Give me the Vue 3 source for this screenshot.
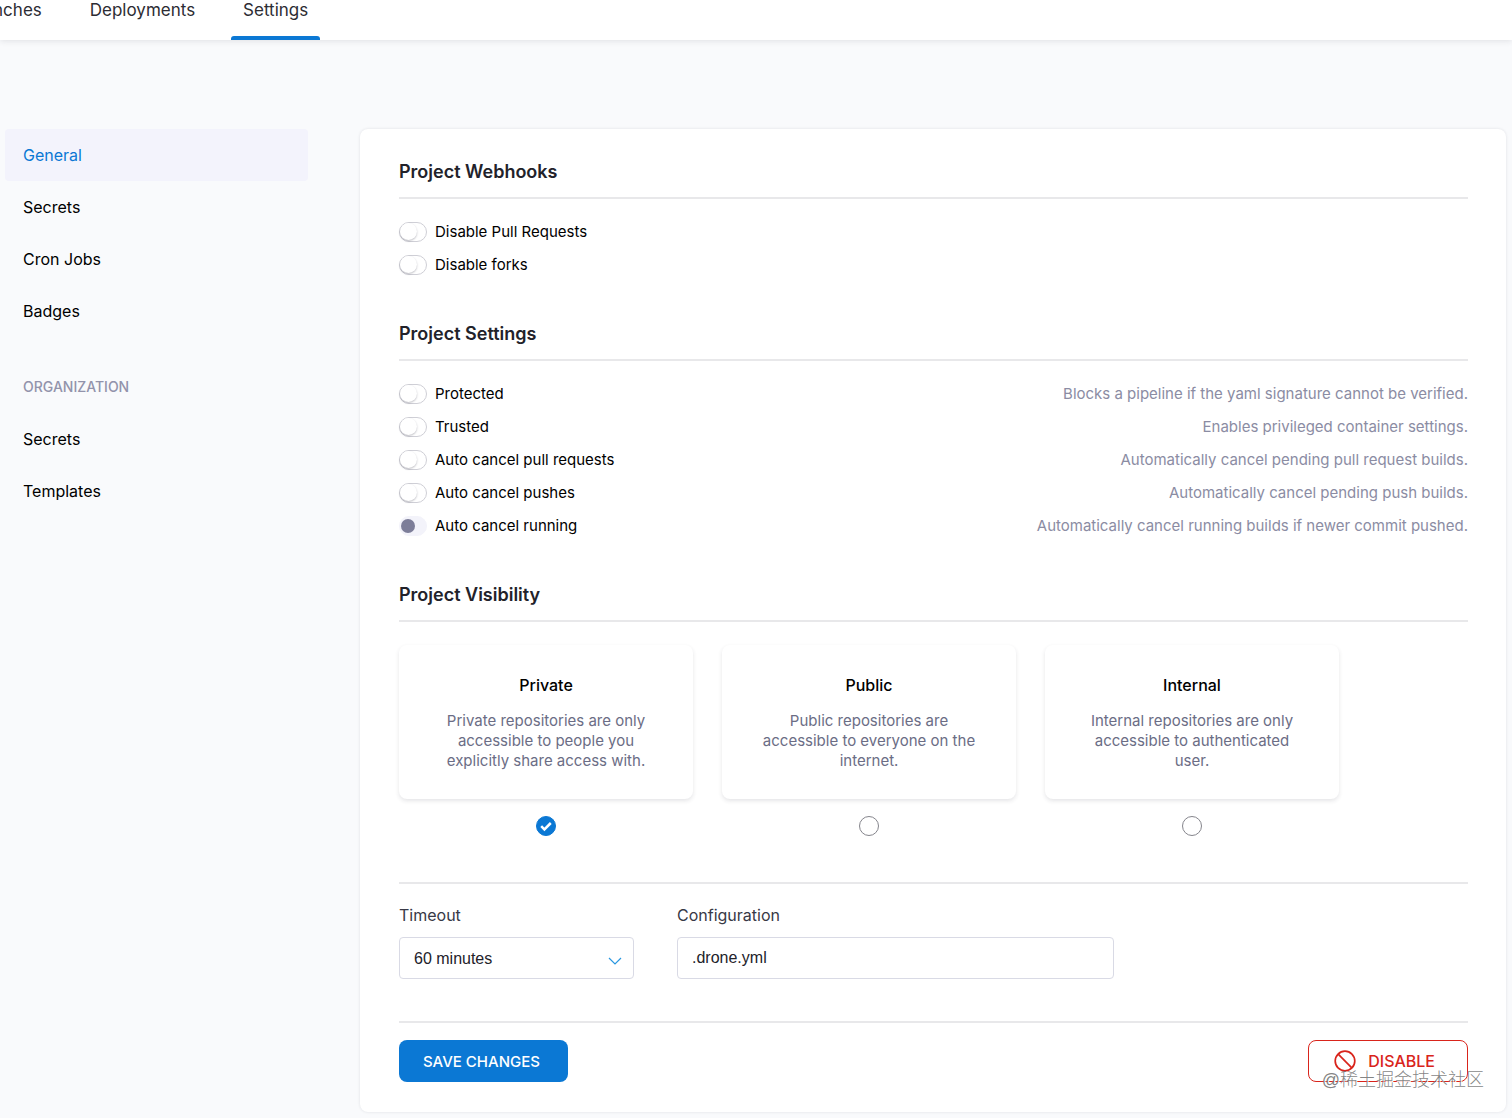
<template>
  <div class="page">
    <header class="topbar">
      <nav class="tabs">
        <a
          v-for="tab in tabs"
          :key="tab"
          href="#"
          class="tab"
          :class="{ active: tab === activeTab }"
          @click.prevent="activeTab = tab"
        >{{ tab }}</a>
      </nav>
    </header>

    <div class="layout">
      <aside class="sidebar">
        <a
          v-for="item in projectLinks"
          :key="item"
          href="#"
          class="side-link"
          :class="{ active: item === 'General' }"
          @click.prevent
        >{{ item }}</a>
        <h2 class="side-title">ORGANIZATION</h2>
        <a v-for="item in orgLinks" :key="item" href="#" class="side-link" @click.prevent>{{ item }}</a>
      </aside>

      <main class="panel">
        <section class="section">
          <h3 class="section-title">Project Webhooks</h3>
          <div v-for="row in webhooks" :key="row.label" class="row">
            <label class="row-label">
              <input v-model="row.on" type="checkbox" class="toggle" />
              {{ row.label }}
            </label>
          </div>
        </section>

        <section class="section">
          <h3 class="section-title">Project Settings</h3>
          <div v-for="row in settings" :key="row.label" class="row">
            <label class="row-label">
              <input v-model="row.on" type="checkbox" class="toggle" :disabled="row.disabled" />
              {{ row.label }}
            </label>
            <span class="hint">{{ row.hint }}</span>
          </div>
        </section>

        <section class="section">
          <h3 class="section-title">Project Visibility</h3>
          <div class="visibility">
            <label v-for="item in visibilities" :key="item.name" class="option">
              <span class="option-card">
                <span class="option-name">{{ item.name }}</span>
                <span class="option-text">{{ item.text }}</span>
              </span>
              <span class="radio-wrap">
                <input v-model="visibility" type="radio" name="visibility" class="radio" :value="item.name" />
                <svg v-if="visibility === item.name" class="radio-check" viewBox="0 0 20 20">
                  <path d="M5.2 10.2l3.2 3.2 6.4-6.4" fill="none" stroke="#fff" stroke-width="2.5" />
                </svg>
              </span>
            </label>
          </div>
        </section>

        <div class="fields">
          <div class="field timeout">
            <label for="timeout">Timeout</label>
            <div class="select-wrap">
              <select id="timeout" v-model="timeout" class="control">
                <option v-for="t in timeouts" :key="t">{{ t }}</option>
              </select>
              <svg class="chevron" viewBox="0 0 14 8">
                <path d="M1 1l6 6 6-6" fill="none" stroke="#2a97e0" stroke-width="1.2" />
              </svg>
            </div>
          </div>
          <div class="field config">
            <label for="config">Configuration</label>
            <input id="config" v-model="config" type="text" class="control" />
          </div>
        </div>

        <div class="actions">
          <button type="button" class="btn save">SAVE CHANGES</button>
          <button type="button" class="btn disable">
            <svg class="ban" viewBox="0 0 22 22">
              <g fill="none" stroke="#d9241b" stroke-width="1.7">
                <circle cx="11" cy="11" r="9.8" />
                <path d="M4.2 4.2l13.6 13.6" />
              </g>
            </svg>
            DISABLE
          </button>
        </div>
      </main>
    </div>

    <div class="watermark">@稀土掘金技术社区</div>
  </div>
</template>

<script setup>
import { ref } from 'vue'

const tabs = ['Branches', 'Deployments', 'Settings']
const activeTab = ref('Settings')

const projectLinks = ['General', 'Secrets', 'Cron Jobs', 'Badges']
const orgLinks = ['Secrets', 'Templates']

const webhooks = ref([
  { label: 'Disable Pull Requests', on: false },
  { label: 'Disable forks', on: false }
])

const settings = ref([
  { label: 'Protected', on: false, hint: 'Blocks a pipeline if the yaml signature cannot be verified.' },
  { label: 'Trusted', on: false, hint: 'Enables privileged container settings.' },
  { label: 'Auto cancel pull requests', on: false, hint: 'Automatically cancel pending pull request builds.' },
  { label: 'Auto cancel pushes', on: false, hint: 'Automatically cancel pending push builds.' },
  { label: 'Auto cancel running', on: false, disabled: true, hint: 'Automatically cancel running builds if newer commit pushed.' }
])

const visibility = ref('Private')
const visibilities = [
  { name: 'Private', text: 'Private repositories are only accessible to people you explicitly share access with.' },
  { name: 'Public', text: 'Public repositories are accessible to everyone on the internet.' },
  { name: 'Internal', text: 'Internal repositories are only accessible to authenticated user.' }
]

const timeout = ref('60 minutes')
const timeouts = ['30 minutes', '60 minutes', '90 minutes']
const config = ref('.drone.yml')
</script>

<style>
body {
  background: #f9fafc;
}
</style>

<style scoped>
.page {
  position: relative;
  min-height: 100vh;
  overflow: hidden;
  font-family: Inter, "Liberation Sans", sans-serif;
  font-size: 16px;
  color: #000;
}

.page * {
  box-sizing: border-box;
}

a {
  text-decoration: none;
}

.topbar {
  height: 40px;
  background: #fff;
  box-shadow: 0 1px 6px rgba(40, 41, 61, 0.12);
}

.tabs {
  display: flex;
  gap: 24px;
  height: 40px;
  margin-left: -46px;
}

.tab {
  display: flex;
  flex-direction: column;
  justify-content: space-between;
  padding: 0 12px;
  line-height: 20px;
  font-size: 17px;
  color: #2c2c33;
}

.tab.active::after {
  content: "";
  height: 4px;
  margin: 0 -12px;
  border-radius: 3px 3px 0 0;
  background: #0b78d4;
}

.layout {
  display: flex;
  align-items: flex-start;
  gap: 52px;
  padding: 89px 6px 6px 5px;
}

.sidebar {
  flex: 0 0 303px;
}

.side-link {
  display: block;
  padding: 0 18px;
  line-height: 52px;
  color: #000;
}

.side-link.active {
  color: #0b78d4;
  background: #f3f3fc;
  border-radius: 4px;
}

.side-title {
  margin: 24px 0 0;
  padding: 0 18px;
  line-height: 52px;
  font-size: 14px;
  font-weight: 500;
  color: #9293ab;
}

.panel {
  flex: 1;
  min-width: 0;
  padding: 31px 38px 30px 39px;
  background: #fff;
  border-radius: 8px;
  box-shadow: 0 0 3px rgba(40, 41, 61, 0.12);
}

.section {
  margin-bottom: 41px;
}

.section-title {
  margin: 0 0 16px;
  padding-bottom: 13px;
  border-bottom: 2px solid #e8e8ea;
  line-height: 24px;
  font-size: 18px;
  font-weight: 600;
  color: #22222a;
}

.row {
  display: flex;
  align-items: center;
  justify-content: space-between;
  height: 33px;
  font-size: 15px;
}

.row-label {
  display: flex;
  align-items: center;
  gap: 8px;
}

.toggle {
  appearance: none;
  width: 28px;
  height: 20px;
  margin: 0;
  border: 1px solid #cfcfd6;
  border-radius: 10px;
  background: #fff;
}

.toggle::before {
  content: "";
  display: block;
  width: 17px;
  height: 17px;
  border-radius: 50%;
  background: #fff;
  box-shadow: 0 1px 2px rgba(40, 41, 61, 0.3);
}

.toggle:checked::before {
  margin-left: 9px;
  background: #0b78d4;
}

.toggle:disabled {
  padding: 2px 1px;
  border-color: #f3f3fa;
  background: #f3f3fa;
}

.toggle:disabled::before {
  width: 14px;
  height: 14px;
  background: #7d7e99;
  box-shadow: none;
}

.hint {
  color: #8b8ca3;
}

.visibility {
  display: grid;
  grid-template-columns: repeat(3, minmax(0, 294px));
  gap: 29px;
  margin-top: 23px;
}

.option {
  display: flex;
  flex-direction: column;
  align-items: center;
  gap: 17px;
}

.option-card {
  display: flex;
  flex-direction: column;
  gap: 14px;
  width: 100%;
  padding: 28px 36px;
  border-radius: 8px;
  text-align: center;
  box-shadow: 0 2px 4px rgba(40, 41, 61, 0.12);
}

.option-name {
  line-height: 24px;
  font-weight: 500;
}

.option-text {
  line-height: 20px;
  font-size: 15px;
  color: #6b6d85;
}

.radio-wrap {
  position: relative;
  height: 20px;
}

.radio {
  display: block;
  appearance: none;
  width: 20px;
  height: 20px;
  margin: 0;
  border: 1px solid #85858c;
  border-radius: 50%;
}

.radio:checked {
  border-color: #0b78d4;
  background: #0b78d4;
}

.radio-check {
  position: absolute;
  inset: 0;
  pointer-events: none;
}

.fields {
  display: flex;
  gap: 43px;
  margin-top: 46px;
  padding: 19px 0 42px;
  border-top: 2px solid #e8e8ea;
  border-bottom: 2px solid #e8e8ea;
}

.field {
  display: flex;
  flex-direction: column;
  gap: 10px;
}

.field label {
  line-height: 24px;
  color: #383946;
}

.timeout {
  flex: 0 1 235px;
}

.config {
  flex: 0 1 437px;
}

.select-wrap {
  position: relative;
}

.control {
  appearance: none;
  width: 100%;
  height: 42px;
  padding: 0 14px;
  border: 1px solid #d9dae5;
  border-radius: 4px;
  background: #fff;
  font-family: "Liberation Sans", Arial, sans-serif;
  font-size: 16px;
  color: #22222a;
}

.chevron {
  position: absolute;
  right: 12px;
  top: 20px;
  width: 14px;
  height: 8px;
  pointer-events: none;
}

.actions {
  display: flex;
  justify-content: space-between;
  padding-top: 17px;
}

.btn {
  display: flex;
  align-items: center;
  height: 42px;
  border-radius: 8px;
  font-family: inherit;
  font-weight: 500;
}

.save {
  padding: 0 28px 0 24px;
  border: none;
  background: #0b78d4;
  font-size: 15px;
  color: #fff;
}

.disable {
  gap: 12px;
  padding: 0 32px 0 25px;
  border: 1px solid #d9241b;
  background: #fff;
  font-size: 16px;
  color: #d9241b;
}

.ban {
  width: 22px;
  height: 22px;
}

.watermark {
  position: absolute;
  right: 28px;
  bottom: 25px;
  line-height: 26px;
  font-family: "Liberation Sans", "Noto Sans CJK SC", sans-serif;
  font-size: 18px;
  font-weight: 300;
  color: rgba(110, 110, 110, 0.85);
  text-shadow: 1px 1px 0 #fff;
  pointer-events: none;
}
</style>
